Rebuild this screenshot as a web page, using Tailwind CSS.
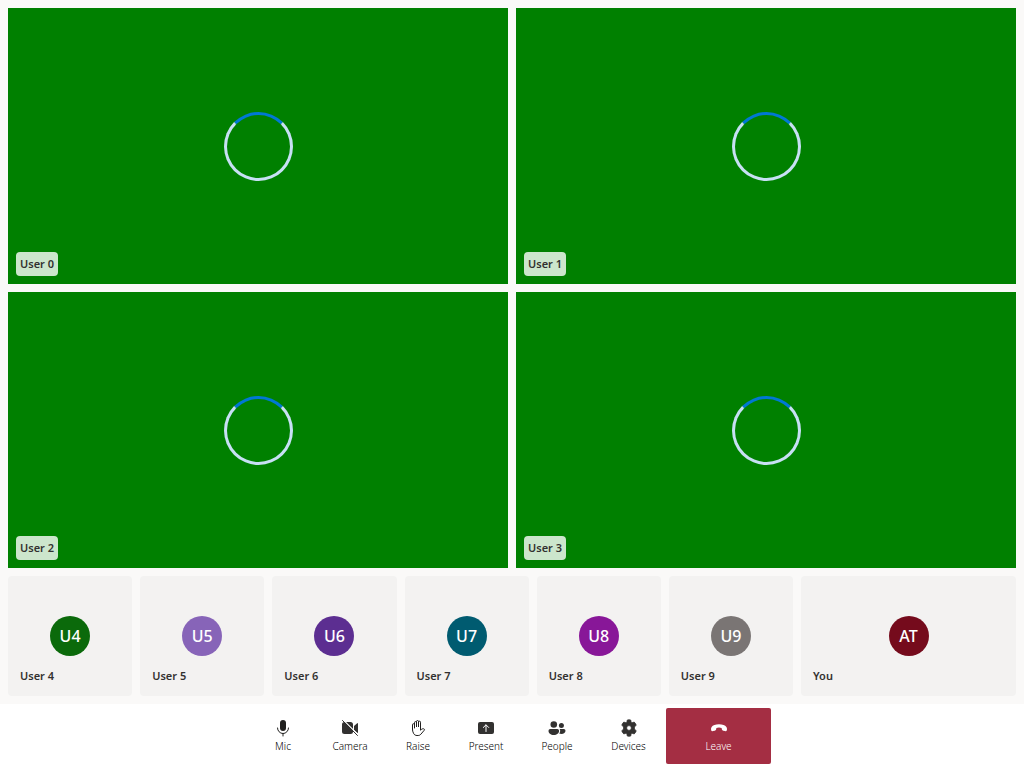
<!DOCTYPE html>
<html lang="en">
<head>
<meta charset="utf-8">
<meta name="viewport" content="width=device-width, initial-scale=1">
<title>Group call</title>
<script src="https://cdn.jsdelivr.net/npm/@tailwindcss/browser@4"></script>
</head>
<body class="flex h-screen flex-col bg-white font-['Segoe_UI','Noto_Sans',sans-serif] text-[11px] text-[#323130]">
<main class="flex min-h-0 flex-1 flex-col gap-2 bg-[#faf9f8] p-2">
  <section aria-label="Video gallery" class="grid min-h-0 flex-1 grid-cols-2 grid-rows-2 gap-2">
    <article class="relative flex items-center justify-center bg-[#008000]">
      <div role="status" aria-label="Loading" class="aspect-square h-1/4 rounded-full border-3 border-[#c7e0f4] border-t-[#0078d4]"></div>
      <span class="absolute bottom-2 left-2 rounded bg-white/80 px-1 leading-6 font-semibold">User 0</span>
    </article>
    <article class="relative flex items-center justify-center bg-[#008000]">
      <div role="status" aria-label="Loading" class="aspect-square h-1/4 rounded-full border-3 border-[#c7e0f4] border-t-[#0078d4]"></div>
      <span class="absolute bottom-2 left-2 rounded bg-white/80 px-1 leading-6 font-semibold">User 1</span>
    </article>
    <article class="relative flex items-center justify-center bg-[#008000]">
      <div role="status" aria-label="Loading" class="aspect-square h-1/4 rounded-full border-3 border-[#c7e0f4] border-t-[#0078d4]"></div>
      <span class="absolute bottom-2 left-2 rounded bg-white/80 px-1 leading-6 font-semibold">User 2</span>
    </article>
    <article class="relative flex items-center justify-center bg-[#008000]">
      <div role="status" aria-label="Loading" class="aspect-square h-1/4 rounded-full border-3 border-[#c7e0f4] border-t-[#0078d4]"></div>
      <span class="absolute bottom-2 left-2 rounded bg-white/80 px-1 leading-6 font-semibold">User 3</span>
    </article>
  </section>
  <section aria-label="Participants" class="flex h-30 shrink-0 gap-2">
    <article class="flex flex-1 flex-col justify-end gap-2 rounded bg-[#f3f2f1] px-3 pb-2">
      <div class="flex size-10 items-center justify-center self-center rounded-full bg-[#0b6a0b] text-base font-medium text-white">U4</div>
      <span class="leading-6 font-semibold">User 4</span>
    </article>
    <article class="flex flex-1 flex-col justify-end gap-2 rounded bg-[#f3f2f1] px-3 pb-2">
      <div class="flex size-10 items-center justify-center self-center rounded-full bg-[#8764b8] text-base font-medium text-white">U5</div>
      <span class="leading-6 font-semibold">User 5</span>
    </article>
    <article class="flex flex-1 flex-col justify-end gap-2 rounded bg-[#f3f2f1] px-3 pb-2">
      <div class="flex size-10 items-center justify-center self-center rounded-full bg-[#5c2e91] text-base font-medium text-white">U6</div>
      <span class="leading-6 font-semibold">User 6</span>
    </article>
    <article class="flex flex-1 flex-col justify-end gap-2 rounded bg-[#f3f2f1] px-3 pb-2">
      <div class="flex size-10 items-center justify-center self-center rounded-full bg-[#005b70] text-base font-medium text-white">U7</div>
      <span class="leading-6 font-semibold">User 7</span>
    </article>
    <article class="flex flex-1 flex-col justify-end gap-2 rounded bg-[#f3f2f1] px-3 pb-2">
      <div class="flex size-10 items-center justify-center self-center rounded-full bg-[#881798] text-base font-medium text-white">U8</div>
      <span class="leading-6 font-semibold">User 8</span>
    </article>
    <article class="flex flex-1 flex-col justify-end gap-2 rounded bg-[#f3f2f1] px-3 pb-2">
      <div class="flex size-10 items-center justify-center self-center rounded-full bg-[#7a7574] text-base font-medium text-white">U9</div>
      <span class="leading-6 font-semibold">User 9</span>
    </article>
    <article class="flex w-[215px] flex-none flex-col justify-end gap-2 rounded bg-[#f3f2f1] px-3 pb-2">
      <div class="flex size-10 items-center justify-center self-center rounded-full bg-[#750b1c] text-base font-medium text-white">AT</div>
      <span class="leading-6 font-semibold">You</span>
    </article>
  </section>
</main>
<footer class="flex h-16 shrink-0 justify-center bg-white py-1 font-light text-black">
  <button type="button" class="flex w-[60px] flex-col items-center justify-center text-[10px] leading-4">
    <svg class="size-5" viewBox="0 0 20 20" fill="none" aria-hidden="true"><rect x="7" y="2" width="6" height="11" rx="3" fill="#201f1e"/><path d="M4.500 10a5.500 5.500 0 0 0 11 0M10 15.500V18" stroke="#201f1e" stroke-linecap="round"/></svg>
    Mic
  </button>
  <button type="button" class="flex w-[74px] flex-col items-center justify-center text-[10px] leading-4">
    <svg class="size-5" viewBox="0 0 20 20" fill="#323130" aria-hidden="true"><path d="M4.500 4h6A2.500 2.500 0 0 1 13 6.500v7a2.500 2.500 0 0 1-2.500 2.500h-6A2.500 2.500 0 0 1 2 13.500v-7A2.500 2.500 0 0 1 4.500 4ZM14 7.900l3.200-2.700A.5.5 0 0 1 18 5.600v8.800a.5.5 0 0 1-.8.4L14 12.100Z"/><path d="m3.200 1.800 15.300 15.300" stroke="white" stroke-width="1.200"/><path d="m2.500 2.500 15 15" stroke="#323130" stroke-linecap="round"/></svg>
    Camera
  </button>
  <button type="button" class="flex w-[62px] flex-col items-center justify-center text-[10px] leading-4">
    <svg class="size-5" viewBox="0 0 20 20" fill="none" stroke="#201f1e" stroke-linecap="round" stroke-linejoin="round" aria-hidden="true"><path d="M6.500 10V4.600a1 1 0 0 1 2 0V9V3.500a1 1 0 0 1 2 0V9V4.200a1 1 0 0 1 2 0V12.200c1-.9 1.900-1.700 3.200-1.400.9.300 1 .9.500 1.500l-3.400 4c-.7.800-1.500 1.200-2.600 1.200H9c-1.600 0-2.800-.8-3.500-2.200C4.700 13.700 4.500 12.500 4.500 11V6.700a1 1 0 0 1 2 0"/></svg>
    Raise
  </button>
  <button type="button" class="flex w-[74px] flex-col items-center justify-center text-[10px] leading-4">
    <svg class="size-5" viewBox="0 0 20 20" fill="none" aria-hidden="true"><rect x="2" y="4" width="16" height="12" rx="2" fill="#323130"/><path d="M10 13.500V7M7.300 9.500 10 6.800l2.700 2.700" stroke="white" stroke-linecap="round" stroke-linejoin="round"/></svg>
    Present
  </button>
  <button type="button" class="flex w-[68px] flex-col items-center justify-center text-[10px] leading-4">
    <svg class="size-5" viewBox="0 0 20 20" fill="#323130" aria-hidden="true"><circle cx="6.800" cy="6.500" r="3.300"/><circle cx="14.400" cy="7.500" r="2.500"/><path d="M3.300 11h7a1.800 1.800 0 0 1 1.800 1.800c0 2.600-2.200 4.200-5.300 4.200s-5.300-1.600-5.300-4.200A1.800 1.800 0 0 1 3.300 11ZM12.500 11h4.300a1.700 1.700 0 0 1 1.700 1.700c0 1.900-1.600 3.300-4.200 3.300-.9 0-1.500-.2-2.100-.5.700-.8 1-1.700 1-2.700 0-.700-.3-1.300-.7-1.800Z"/></svg>
    People
  </button>
  <button type="button" class="flex w-[75px] flex-col items-center justify-center text-[10px] leading-4">
    <svg class="size-5" viewBox="0 0 20 20" fill="#323130" aria-hidden="true"><path stroke="#323130" stroke-width=".8" stroke-linejoin="round" fill-rule="evenodd" d="M8.300 2q1.700-.4 3.400 0l.4 1.900q.2.800 1 .8l2.100-.6q1.300 1.200 2 3l-1.500 1.700q-.9 1.200 0 2.400l1.500 1.700q-.7 1.800-2 3l-2.100-.6q-.8 0-1 .8l-.4 1.900q-1.700.4-3.400 0l-.4-1.900q-.2-.8-1-.8l-2.100.6q-1.300-1.200-2-3l1.500-1.700q.9-1.200 0-2.400L2.800 7.100q.7-1.800 2-3l2.100.6q.8 0 1-.8ZM10 7.600a2.400 2.400 0 1 0 0 4.800 2.400 2.400 0 0 0 0-4.800Z"/></svg>
    Devices
  </button>
  <button type="button" class="flex w-[105px] flex-col items-center justify-center rounded-xs bg-[#a42e43] text-[10px] leading-4 text-white">
    <svg class="size-5" viewBox="0 0 20 20" fill="white" aria-hidden="true"><path d="M10 6.200c3.500 0 6.200 1 7.400 2.800.6.900.7 2 .5 2.900-.2.900-1 1.400-1.900 1.200l-1.700-.3c-.7-.1-1.200-.6-1.400-1.300l-.3-1.400C11.900 9.800 11 9.600 10 9.600s-1.900.2-2.600.5l-.3 1.400c-.2.700-.7 1.200-1.400 1.300l-1.700.3c-.9.200-1.700-.3-1.900-1.200-.2-.9-.1-2 .5-2.900C3.800 7.200 6.500 6.200 10 6.200Z"/></svg>
    Leave
  </button>
</footer>
</body>
</html>
